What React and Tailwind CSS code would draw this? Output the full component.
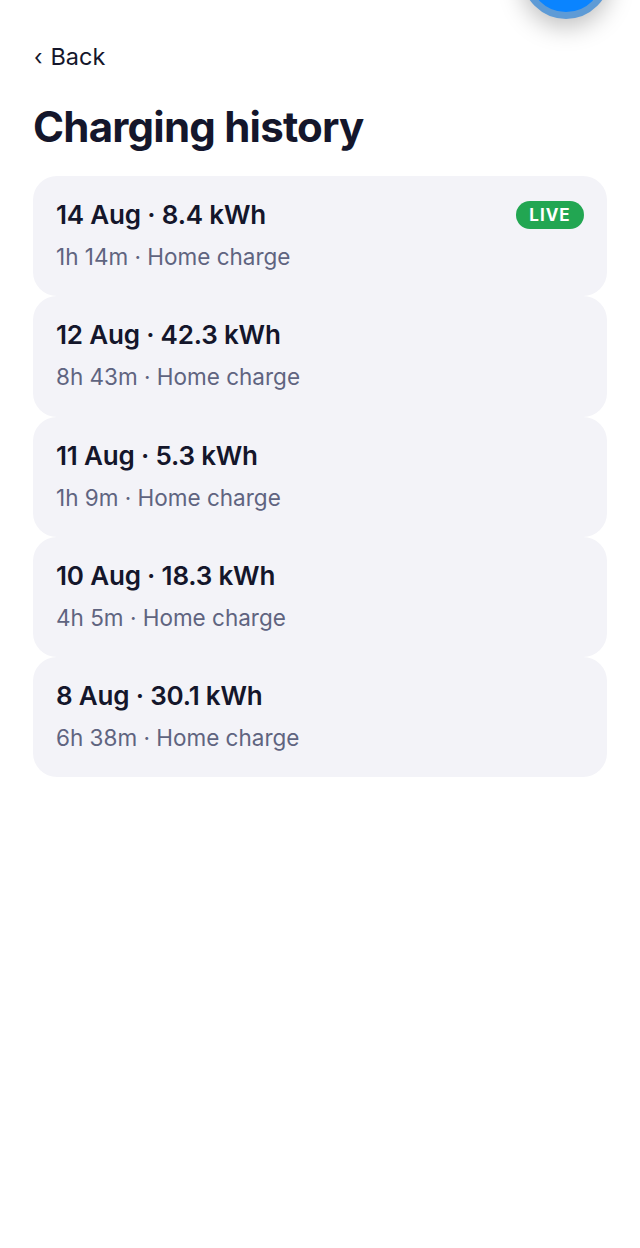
const rows = [
  { title: "14 Aug · 8.4 kWh", sub: "1h 14m · Home charge", live: true },
  { title: "12 Aug · 42.3 kWh", sub: "8h 43m · Home charge" },
  { title: "11 Aug · 5.3 kWh", sub: "1h 9m · Home charge" },
  { title: "10 Aug · 18.3 kWh", sub: "4h 5m · Home charge" },
  { title: "8 Aug · 30.1 kWh", sub: "6h 38m · Home charge" },
];

export default function App() {
  return (
    <div className="relative h-[1248px] w-[640px] overflow-hidden bg-white font-['Inter',sans-serif] text-[#14162b]">
      <div className="absolute left-[522px] top-[-69px] h-[88px] w-[88px] rounded-full border-[7px] border-[#5e9bd6] bg-[#0a84ff] shadow-[0_8px_24px_rgba(0,0,0,0.25)]" />
      <div className="px-[33px] pt-[41px]">
        <div className="flex h-[32px] items-center text-[23.5px] leading-[32px]">
          <span className="ml-[1px] mr-[8px] text-[22px]">‹</span>
          <span>Back</span>
        </div>
        <h1 className="mt-[26px] text-[42px] font-bold leading-[56px] tracking-[-0.78px]">Charging history</h1>
        <div className="mt-[21px] flex flex-col">
          {rows.map((r) => (
            <div key={r.title} className="flex h-[120.25px] items-start justify-between rounded-[24px] bg-[#f3f3f8] px-[23px] pt-[23px]">
              <div>
                <div className="text-[26px] font-semibold leading-[32px] tracking-[-0.18px]">{r.title}</div>
                <div className="mt-[10px] text-[22.5px] leading-[32px] text-[#5f6480]">{r.sub}</div>
              </div>
              {r.live && (
                <span className="mt-[2px] flex h-[28px] w-[68px] items-center justify-center rounded-full bg-[#22a652] pt-[1px] text-[17px] font-bold tracking-[1px] text-white">LIVE</span>
              )}
            </div>
          ))}
        </div>
      </div>
    </div>
  );
}
